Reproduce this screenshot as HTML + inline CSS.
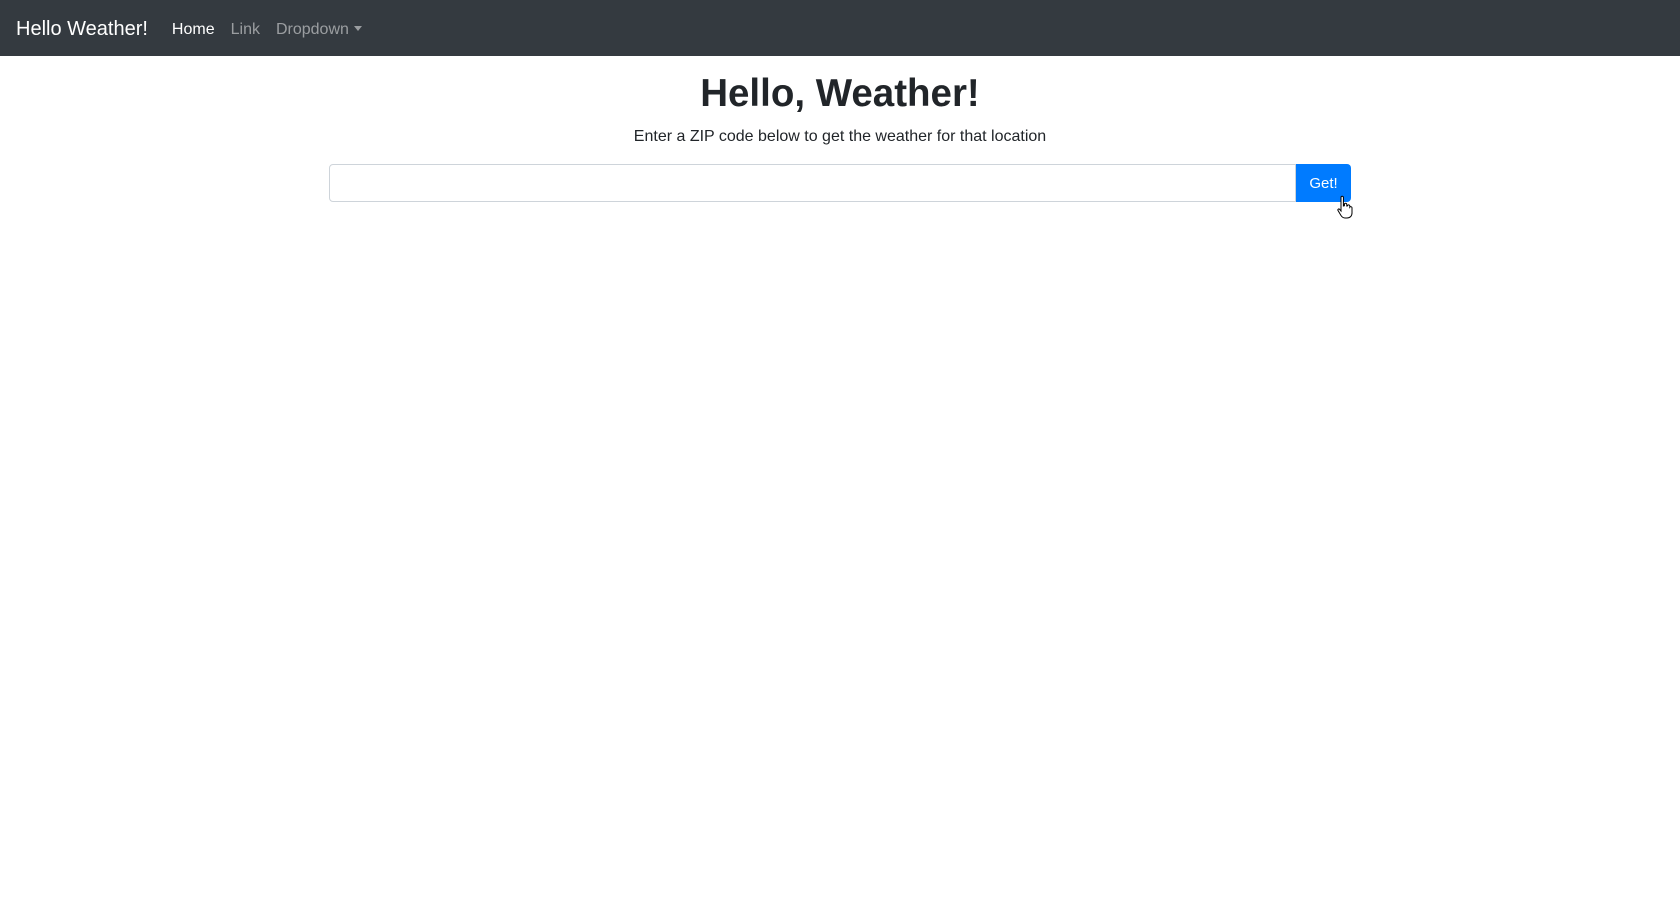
<!DOCTYPE html>
<html><head><style>
body{margin:0;font-family:"Liberation Sans",sans-serif;background:#fff;color:#212529}
nav{height:56px;background:#343a40;display:flex;align-items:center;padding:3px 16px 0;box-sizing:border-box}
.brand{color:#fff;font-size:20px;margin-right:24px}
nav a{font-size:16px;color:rgba(255,255,255,.5);margin-right:16px;text-decoration:none}
nav a.act{color:#fff}
.caret{display:inline-block;border-top:5px solid;border-left:4.5px solid transparent;border-right:4.5px solid transparent;vertical-align:3px;margin-left:5px}
h1{margin:0;position:absolute;top:70px;width:100%;text-align:center;font-size:38.5px;font-weight:bold;line-height:48px}
p{position:absolute;top:127px;width:100%;text-align:center;margin:0;font-size:16px;line-height:20px}
.inp{position:absolute;left:329px;top:164px;width:967px;height:38px;box-sizing:border-box;border:1px solid #ced4da;border-radius:4px 0 0 4px}
.btn{position:absolute;left:1296px;top:164px;width:55px;height:38px;background:#007bff;color:#fff;border-radius:0 4px 4px 0;font-size:15px;line-height:40px;text-align:center}
</style></head><body>
<nav><span class="brand">Hello Weather!</span><a class="act">Home</a><a>Link</a><a>Dropdown<span class="caret"></span></a></nav>
<h1>Hello, Weather!</h1>
<p>Enter a ZIP code below to get the weather for that location</p>
<div class="inp"></div><div class="btn">Get!</div>
<svg style="position:absolute;left:1337px;top:195px" width="16" height="26" viewBox="0 0 16 26"><path d="M4 2.5a1.2 1.2 0 0 1 2.4 0V11l1-.3V9.5a1.2 1.2 0 0 1 2.4 0V11l.6-.1a1.2 1.2 0 0 1 2.4.3v1a1.2 1.2 0 0 1 2.2.5V18c0 3-2 5-5 5H8c-2 0-3-1-4-2.5L1 15.5c-.6-1 .6-2 1.5-1.3L4 16z" fill="#fff" stroke="#000" stroke-width="1"/></svg>
</body></html>
